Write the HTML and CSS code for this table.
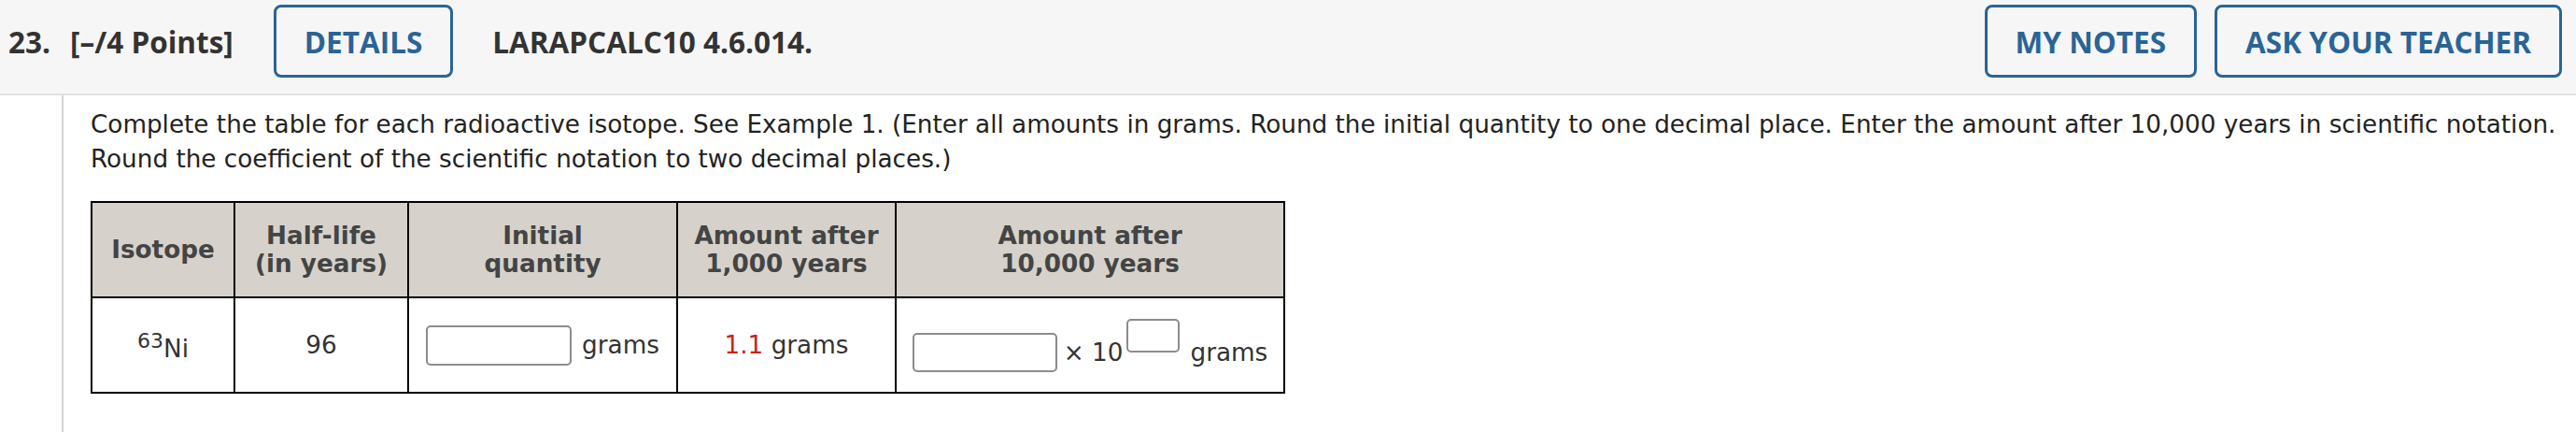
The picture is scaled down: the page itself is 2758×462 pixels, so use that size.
FILE: index.html
```html
<!DOCTYPE html>
<html lang="en">
<head>
<meta charset="utf-8">
<title>Question 23</title>
<link rel="stylesheet" href="styles.css">
</head>
<body>
<div class="page">
  <header class="qhead">
    <div class="qtitle"><span class="qnum">23.</span><span class="qpts">[–/4 Points]</span></div>
    <button class="btn btn-details" type="button">DETAILS</button>
    <div class="qcode">LARAPCALC10 4.6.014.</div>
    <div class="actions">
      <button class="btn" type="button">MY NOTES</button>
      <button class="btn" type="button">ASK YOUR TEACHER</button>
    </div>
  </header>
  <main class="qbody">
    <p class="prompt">Complete the table for each radioactive isotope. See Example 1. (Enter all amounts in grams. Round the initial quantity to one decimal place. Enter the amount after 10,000 years in scientific notation. Round the coefficient of the scientific notation to two decimal places.)</p>
    <table class="iso">
      <colgroup>
        <col class="c1"><col class="c2"><col class="c3"><col class="c4"><col class="c5">
      </colgroup>
      <thead>
        <tr>
          <th>Isotope</th>
          <th>Half-life<br>(in years)</th>
          <th>Initial<br>quantity</th>
          <th>Amount after<br>1,000 years</th>
          <th>Amount after<br>10,000 years</th>
        </tr>
      </thead>
      <tbody>
        <tr>
          <td><sup>63</sup>Ni</td>
          <td>96</td>
          <td><div class="field"><input class="ans" type="text" aria-label="Initial quantity"><span>grams</span></div></td>
          <td><span class="given">1.1</span> grams</td>
          <td><div class="sci"><input class="ans coef" type="text" aria-label="Coefficient"><span class="times">× 10</span><input class="ans exp" type="text" aria-label="Exponent"><span class="unit">grams</span></div></td>
        </tr>
      </tbody>
    </table>
  </main>
</div>
</body>
</html>
```
FILE: styles.css
```css
html, body {
  margin: 0;
  height: 100%;
}
body {
  background: #ffffff;
  font-family: Verdana, "DejaVu Sans", sans-serif;
  color: #222222;
}
.page {
  display: flex;
  flex-direction: column;
  min-height: 100vh;
}
.qhead {
  display: flex;
  align-items: center;
  box-sizing: border-box;
  height: 102px;
  padding: 5px 15px 17px 9px;
  background: #f6f6f6;
  border-bottom: 2px solid #e1e1e1;
  font-family: "Open Sans", "Liberation Sans", sans-serif;
}
.qtitle, .qcode {
  font-size: 31.5px;
  font-weight: 700;
  color: #333333;
  white-space: nowrap;
}
.qpts {
  margin-left: 21px;
}
.btn-details {
  margin-left: 43px;
}
.qcode {
  margin-left: 42px;
}
.actions {
  margin-left: auto;
  display: flex;
  gap: 19px;
}
.btn {
  box-sizing: border-box;
  height: 78px;
  padding: 0 30px;
  background: transparent;
  border: 3px solid #2a6496;
  border-radius: 8px;
  color: #2a6496;
  font-family: "Open Sans", "Liberation Sans", sans-serif;
  font-size: 31.5px;
  font-weight: 700;
  white-space: nowrap;
}
.qbody {
  flex: 1;
  margin-left: 66px;
  border-left: 2px solid #d3d3d3;
  padding: 13px 20px 0 29px;
}
.prompt {
  margin: 0;
  font-size: 26.25px;
  line-height: 37px;
  color: #222222;
}
.iso {
  margin-top: 26px;
  border-collapse: collapse;
  table-layout: fixed;
  width: 1279px;
  font-size: 26.25px;
}
.c1 { width: 153px; }
.c2 { width: 186px; }
.c3 { width: 288px; }
.c4 { width: 234px; }
.c5 { width: 416px; }
.iso th,
.iso td {
  border: 2.5px solid #000000;
  padding: 0 6px;
  text-align: center;
  vertical-align: middle;
  height: 100px;
}
.iso th {
  background: #d6d2cb;
  color: #444444;
  font-weight: 700;
  line-height: 30px;
}
.iso td {
  color: #333333;
  line-height: 37px;
  white-space: nowrap;
}
.iso sup {
  font-size: 22px;
}
.given {
  color: #c9231b;
}
.field {
  display: flex;
  justify-content: center;
  align-items: center;
  gap: 11px;
}
.ans {
  box-sizing: border-box;
  width: 156px;
  height: 43px;
  margin: 0;
  padding: 0 6px;
  border: 2px solid #8c8c8c;
  border-radius: 5px;
  background: #ffffff;
  font: inherit;
}
.sci {
  display: flex;
  justify-content: center;
  align-items: flex-end;
}
.coef {
  width: 155px;
  height: 42px;
}
.times {
  margin-left: 7px;
  line-height: 42px;
}
.exp {
  width: 57px;
  height: 36px;
  margin-left: 4px;
  margin-bottom: 21px;
}
.unit {
  margin-left: 11px;
  line-height: 42px;
}
```
